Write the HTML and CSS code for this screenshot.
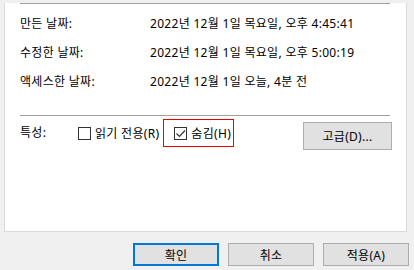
FILE: index.html
```
<html>
<head>
    <meta charset="utf-8">
    <link rel="stylesheet" href="styles.css">
</head>
<body>
    <div class="panel">
        <div class="sep first"></div>
        <div class="row"><span class="label">만든 날짜:</span><span class="value">2022년 12월 1일 목요일, 오후 4:45:41</span></div>
        <div class="row"><span class="label">수정한 날짜:</span><span class="value">2022년 12월 1일 목요일, 오후 5:00:19</span></div>
        <div class="row"><span class="label">액세스한 날짜:</span><span class="value">2022년 12월 1일 오늘, 4분 전</span></div>
        <div class="sep second"></div>
        <div class="attrs">
            <span class="label">특성:</span>
            <label class="check">
                <span class="box"></span>읽기 전용(R)
            </label>
            <label class="check marked">
                <span class="box"><svg width="11" height="11" viewBox="0 0 11 11"><polyline points="1.5,5.5 4.5,8.5 10,2.5" fill="none" stroke="#333" stroke-width="1.2"/></svg></span>숨김(H)
            </label>
            <button class="btn adv">고급(D)...</button>
        </div>
    </div>
    <div class="footer">
        <button class="btn default">확인</button>
        <button class="btn">취소</button>
        <button class="btn">적용(A)</button>
    </div>
</body>
</html>
```

FILE: styles.css
```
body {
    margin: 0;
    background: #f0f0f0;
    font-family: "Noto Sans", "Noto Sans CJK KR", sans-serif;
    font-size: 12px;
    letter-spacing: 0.3px;
    color: #000;
    width: 414px;
    height: 270px;
    overflow: hidden;
}
.panel {
    margin-left: 4px;
    width: 401px;
    height: 228px;
    background: #fff;
    border: 1px solid #d9d9d9;
    border-top: none;
}
.sep {
    margin-left: 15px;
    width: 370px;
    height: 1px;
    background: #a0a0a0;
}
.sep.first {
    margin-top: 3px;
    margin-bottom: 4px;
}
.sep.second {
    margin-top: 20px;
}
.row {
    display: flex;
    align-items: center;
    height: 29px;
    padding-left: 15px;
}
.row .label {
    width: 130px;
}
.attrs {
    display: flex;
    align-items: center;
    padding-left: 15px;
    margin-top: 3px;
    height: 28px;
}
.attrs .label {
    width: 58px;
    margin-top: -2px;
}
.check {
    display: flex;
    align-items: center;
    height: 16px;
}
.box {
    width: 11px;
    height: 11px;
    border: 1px solid #333;
    margin-right: 4px;
    display: flex;
}
.check.marked {
    margin-left: 4px;
    padding: 5px 2px 5px 10px;
    border: 1px solid #e00;
}
.btn {
    font-family: "Noto Sans", "Noto Sans CJK KR", sans-serif;
    font-size: 12px;
    letter-spacing: 0.3px;
    color: #000;
    background: #e1e1e1;
    border: 1px solid #adadad;
    height: 23px;
    width: 86px;
    padding: 0;
}
.btn.adv {
    margin-left: auto;
    margin-right: 14px;
    width: 89px;
    height: 28px;
    margin-top: 6px;
}
.footer {
    display: flex;
    justify-content: flex-end;
    gap: 9px;
    padding: 11px 5px 0 0;
}
.btn.default {
    border: 2px solid #0078d7;
}
```
